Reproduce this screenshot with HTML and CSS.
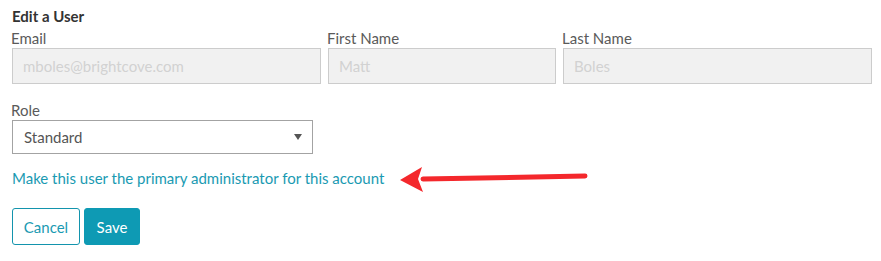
FILE: index.html
```html
<!DOCTYPE html>
<html lang="en">
<head>
	<meta charset="utf-8">
	<title>Edit a User</title>
	<link rel="stylesheet" href="styles.css">
</head>
<body>
	<div class="edit-user">
		<h4 class="title">Edit a User</h4>

		<div class="name-row">
			<div class="field">
				<label>Email</label>
				<input type="text" class="text-input" value="mboles@brightcove.com" readonly>
			</div>
			<div class="field">
				<label>First Name</label>
				<input type="text" class="text-input" value="Matt" readonly>
			</div>
			<div class="field">
				<label>Last Name</label>
				<input type="text" class="text-input" value="Boles" readonly>
			</div>
		</div>

		<div class="field role">
			<label>Role</label>
			<div class="select-box">
				<span>Standard</span>
				<span class="caret"></span>
			</div>
		</div>

		<div class="primary-link">
			<a href="#">Make this user the primary administrator for this account</a>
			<svg class="callout" width="200" height="36" viewBox="0 0 200 36">
				<path d="M26 18 L188 15" stroke="#f4282c" stroke-width="5" stroke-linecap="round" fill="none"/>
				<polygon points="3,19 25,6 21,18 26,31" fill="#f4282c"/>
			</svg>
		</div>

		<div class="buttons">
			<button class="btn btn-cancel">Cancel</button>
			<button class="btn btn-save">Save</button>
		</div>
	</div>
</body>
</html>
```

FILE: styles.css
```css
body {
	margin: 0;
	font-family: Lato, "Open Sans", sans-serif;
	font-size: 15px;
	color: #555;
	background: #fff;
}

.edit-user {
	padding: 6px 12px 0 12px;
}

.title {
	margin: 0 0 2px 0;
	font-size: 15px;
	line-height: 20px;
	font-weight: bold;
	color: #333;
}

.name-row {
	display: grid;
	grid-template-columns: 309px 228px 309px;
	gap: 7px;
}

.field label {
	display: block;
	line-height: 20px;
	margin-left: -1px;
	color: #5a5a5a;
}

.text-input {
	display: block;
	box-sizing: border-box;
	width: 100%;
	height: 36px;
	margin: 0;
	padding: 0 10px;
	border: 1px solid #ccc;
	background: #f1f1f1;
	color: #d2d2d2;
	font-family: inherit;
	font-size: 15px;
	outline: none;
}

.role {
	margin-top: 16px;
}

.select-box {
	box-sizing: border-box;
	width: 301px;
	height: 34px;
	border: 1px solid #a3a3a3;
	padding: 0 10px 0 11px;
	display: flex;
	align-items: center;
	justify-content: space-between;
	color: #555;
}

.caret {
	width: 0;
	height: 0;
	border-left: 4px solid transparent;
	border-right: 4px solid transparent;
	border-top: 6px solid #555;
}

.primary-link {
	position: relative;
	margin-top: 14px;
	line-height: 20px;
}
.primary-link a {
	color: #1a9ab2;
	text-decoration: none;
}

.callout {
	position: absolute;
	left: 385px;
	top: -7px;
}

.buttons {
	display: flex;
	gap: 4px;
	margin-top: 20px;
}

.btn {
	height: 37px;
	border-radius: 3px;
	font-family: inherit;
	font-size: 15px;
	padding: 0;
	cursor: pointer;
}
.btn-cancel {
	width: 68px;
	background: #fff;
	border: 1px solid #1394ad;
	color: #1a9ab2;
}
.btn-save {
	width: 56px;
	background: #0e9ab4;
	border: 1px solid #0e9ab4;
	color: #fff;
}
```
